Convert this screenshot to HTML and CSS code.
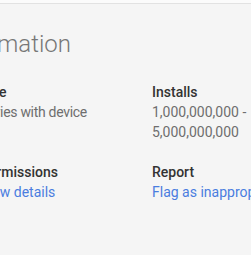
FILE: index.html
```html
<!DOCTYPE html>
<html lang="en">
<head>
    <meta charset="UTF-8">
    <meta name="viewport" content="width=device-width, initial-scale=1.0">
    <title>Additional Information</title>
    <link rel="stylesheet" href="styles.css">
</head>
<body>
    <div class="topbar"></div>

    <div class="info-section">
        <h2 class="info-title">Additional Information</h2>

        <div class="info-grid">
            <div class="info-item">
                <div class="info-label">Updated</div>
                <div class="info-value">March 14, 2018</div>
            </div>
            <div class="info-item">
                <div class="info-label">Size</div>
                <div class="info-value narrow">Varies with device</div>
            </div>
            <div class="info-item">
                <div class="info-label">Installs</div>
                <div class="info-value">1,000,000,000 - 5,000,000,000</div>
            </div>

            <div class="info-item">
                <div class="info-label">In-app Products</div>
                <div class="info-value">$0.99 per item</div>
            </div>
            <div class="info-item">
                <div class="info-label">Permissions</div>
                <div class="info-value"><a href="#">View details</a></div>
            </div>
            <div class="info-item">
                <div class="info-label">Report</div>
                <div class="info-value"><a href="#">Flag as inappropriate</a></div>
            </div>
        </div>
    </div>
</body>
</html>
```

FILE: styles.css
```css
body {
    background-color: #f5f5f5;
    font-family: 'Roboto', sans-serif;
    margin: 0;
    padding: 0;
    overflow: hidden;
    color: #333;
}

.topbar {
    height: 3px;
    background-color: #fbfbfb;
    border-bottom: 1px solid #e2e2e2;
}

.info-section {
    margin-left: -200px;
    padding-top: 24px;
}

.info-title {
    font-size: 24px;
    font-weight: 300;
    line-height: 32px;
    color: #777;
    margin: 0 0 22px 37px;
    white-space: nowrap;
}

.info-grid {
    display: grid;
    grid-template-columns: 180px 172px 176px;
    row-gap: 20px;
}

.info-item {
    font-size: 14px;
    line-height: 20px;
    padding-right: 16px;
}

.info-label {
    font-weight: 500;
    color: #333;
    white-space: nowrap;
}

.info-value {
    color: #6e6e6e;
}

.info-value.narrow {
    letter-spacing: -0.3px;
    white-space: nowrap;
}

.info-value a {
    color: #4a7de0;
    text-decoration: none;
    white-space: nowrap;
}
```
